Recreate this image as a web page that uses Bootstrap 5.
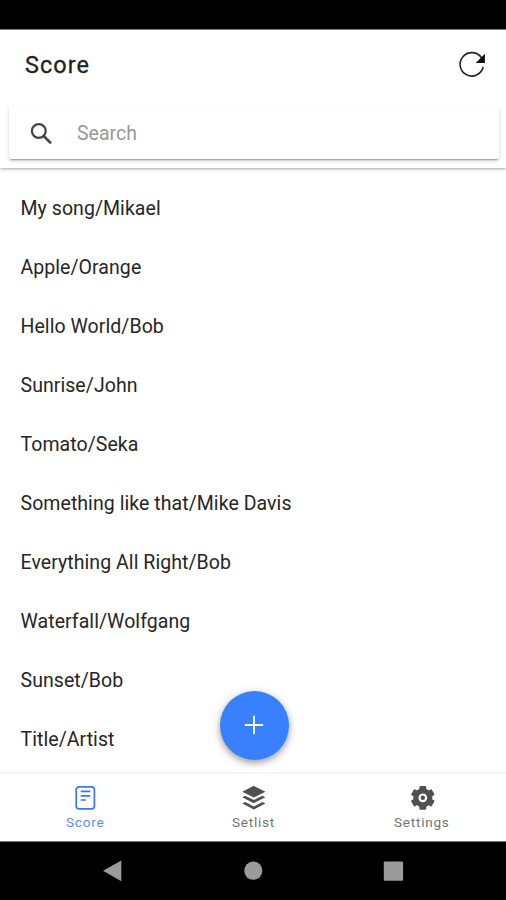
<!DOCTYPE html>
<html lang="en">
<head>
<meta charset="utf-8">
<meta name="viewport" content="width=device-width, initial-scale=1">
<title>Score</title>
<link href="https://cdn.jsdelivr.net/npm/bootstrap@5.3.0/dist/css/bootstrap.min.css" rel="stylesheet">
<style>
body{font-family:Roboto,"Liberation Sans",sans-serif;color:#1c1c1c;background:#fff}
svg{display:block;flex:none}
.phone{height:900px}
.status-strip{height:30px;background:#000;border-bottom:1px solid #858585}
.app-header{height:138px;box-shadow:0 1px 3px rgba(0,0,0,.36);z-index:1}
.title-row{height:71px;padding:0 20px 2px 25px}
.title-text{font-size:23.4px;font-weight:400;-webkit-text-stroke:.3px #222;letter-spacing:1.1px;line-height:1;color:#222;padding-top:2px}
.search-box{height:54px;margin:4px 7px 0 9px;padding-left:21px;gap:24px;border-radius:2px;box-shadow:0 2px 2px -1px rgba(0,0,0,.36),0 2px 4px rgba(0,0,0,.13)}
.search-box svg{margin-top:3px}
.search-box input{font-size:19.5px;color:#333;padding-top:3px!important}
.search-box input::placeholder{color:#999;opacity:1}
.songs{padding-top:11px}
.songs .list-group-item{height:59.05px;padding:0 20.5px;font-size:19.5px;letter-spacing:.06px;color:#262626;background:none}
.add-btn{width:69px;height:69px;left:219.5px;bottom:12.5px;background:#3880ff;box-shadow:0 3px 6px rgba(0,0,0,.3),0 2px 12px rgba(0,0,0,.13)}
.tabs{height:70px;border-top:2px solid #f5f5f5;border-bottom:1px solid #777;padding-left:1px}
.tab-item{color:#747474;font-size:13.6px;letter-spacing:.75px;line-height:16px;padding-top:11px;gap:3px;text-decoration:none}
.tab-item.active{color:#5c8df5}
.system-bar{height:58px;background:#000}
</style>
</head>
<body>
<div class="phone d-flex flex-column overflow-hidden">
  <div class="status-strip flex-shrink-0"></div>
  <header class="app-header flex-shrink-0 bg-white position-relative">
    <div class="title-row d-flex align-items-center justify-content-between">
      <h1 class="title-text m-0">Score</h1>
      <svg width="28" height="28" viewBox="0 0 28 28"><path d="M25.2 16A11.7 11.7 0 1 1 23.6 6.9" fill="none" stroke="#222" stroke-width="1.6"/><path d="M26.9 2.7v9.2h-9.2l4.2-4.2z" fill="#111"/></svg>
    </div>
    <div class="search-box d-flex align-items-center bg-white">
      <svg width="23" height="23" viewBox="0 0 23 23" fill="none" stroke="#444"><circle cx="8.8" cy="9" r="6.9" stroke-width="2.2"/><path d="M13.8 14.1l7.2 7.1" stroke-width="2.7"/></svg>
      <input class="form-control border-0 shadow-none bg-transparent p-0" type="text" placeholder="Search" aria-label="Search">
    </div>
  </header>
  <main class="flex-grow-1 position-relative overflow-hidden">
    <ul class="list-group list-group-flush songs">
      <li class="list-group-item border-0 d-flex align-items-center">My song/Mikael</li>
      <li class="list-group-item border-0 d-flex align-items-center">Apple/Orange</li>
      <li class="list-group-item border-0 d-flex align-items-center">Hello World/Bob</li>
      <li class="list-group-item border-0 d-flex align-items-center">Sunrise/John</li>
      <li class="list-group-item border-0 d-flex align-items-center">Tomato/Seka</li>
      <li class="list-group-item border-0 d-flex align-items-center">Something like that/Mike Davis</li>
      <li class="list-group-item border-0 d-flex align-items-center">Everything All Right/Bob</li>
      <li class="list-group-item border-0 d-flex align-items-center">Waterfall/Wolfgang</li>
      <li class="list-group-item border-0 d-flex align-items-center">Sunset/Bob</li>
      <li class="list-group-item border-0 d-flex align-items-center">Title/Artist</li>
    </ul>
    <button class="add-btn btn rounded-circle border-0 p-0 position-absolute d-flex align-items-center justify-content-center" aria-label="Add">
      <svg width="20" height="20" viewBox="0 0 20 20"><path d="M10 .8v18.4M.8 10h18.4" stroke="#fff" stroke-width="1.8"/></svg>
    </button>
  </main>
  <nav class="tabs d-flex flex-shrink-0 bg-white">
    <a class="tab-item active col-4 d-flex flex-column align-items-center" href="#">
      <svg width="24" height="26" viewBox="0 0 24 26" fill="none" stroke="#3c78f0" stroke-width="1.7"><rect x="3.2" y="1.8" width="18.2" height="22" rx="2.8"/><path d="M7.7 6.3h9.6M7.7 10.8h9.6M7.7 15h5.2"/></svg>
      <span>Score</span>
    </a>
    <a class="tab-item col-4 d-flex flex-column align-items-center" href="#">
      <svg width="26" height="26" viewBox="-1.8 0 26 26" fill="#505050"><path d="M12 .8L23.6 6.7 12 12.6.4 6.7zM.4 12.2L3.4 10.7 12 15.1l8.6-4.4 3 1.5L12 18.2zM.4 18.6l3-1.5 8.6 4.4 8.6-4.4 3 1.5L12 24.6z"/></svg>
      <span>Setlist</span>
    </a>
    <a class="tab-item col-4 d-flex flex-column align-items-center" href="#">
      <svg width="28" height="26" viewBox="-1.8 0 28 26"><g fill="#505050"><circle cx="13" cy="12.8" r="9.6"/><rect id="tooth" x="9.6" y=".9" width="6.8" height="23.8" rx="1"/><use href="#tooth" transform="rotate(60 13 12.8)"/><use href="#tooth" transform="rotate(120 13 12.8)"/></g><circle cx="13" cy="12.8" r="3.3" fill="#505050" stroke="#fff" stroke-width="2.2"/></svg>
      <span>Settings</span>
    </a>
  </nav>
  <div class="system-bar flex-shrink-0 d-flex justify-content-center">
    <svg width="506" height="58" viewBox="0 0 506 58" fill="#9b9b9b"><path d="M103 28.8L121.3 18.5v20.8z"/><circle cx="253.3" cy="28.7" r="9.1"/><rect x="383.8" y="19.5" width="19.3" height="19.3" rx="1"/></svg>
  </div>
</div>
<script src="https://cdn.jsdelivr.net/npm/bootstrap@5.3.0/dist/js/bootstrap.bundle.min.js"></script>
</body>
</html>
